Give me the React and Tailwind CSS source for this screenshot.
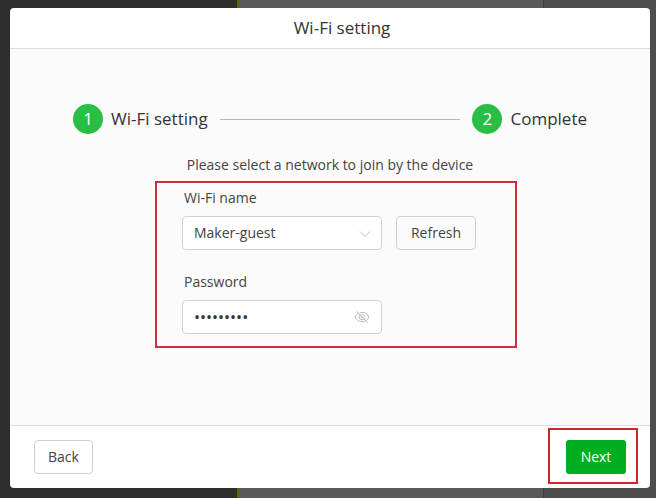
import { useState } from 'react';

const networks = ['Maker-guest', 'Maker-office', 'Maker-lab'];

function StepItem({ number, title }) {
    return (
        <li className="flex items-center gap-2">
            <span className="flex w-[30px] h-[30px] items-center justify-center rounded-full bg-[#28bf45] text-[17px] text-white">
                {number}
            </span>
            <span className="text-[#333]">{title}</span>
        </li>
    );
}

function EyeOffIcon() {
    return (
        <svg className="w-4 h-4" viewBox="0 0 16 16" fill="none" stroke="currentColor" strokeWidth="1">
            <path d="M1 8C2.400 5 4.900 3.300 8 3.300S13.600 5 15 8C13.600 11 11.100 12.700 8 12.700S2.400 11 1 8z" />
            <circle cx="8" cy="8" r="2.800" />
            <circle cx="8" cy="8" r="1" />
            <path stroke="#fff" d="M3.600 1.800L14.600 12.800" />
            <path d="M2.500 2.200L13.800 13.800" />
        </svg>
    );
}

export default function App() {
    const [network, setNetwork] = useState('Maker-guest');
    const [password, setPassword] = useState('maker1234');
    const [showPassword, setShowPassword] = useState(false);

    return (
        <div className="relative flex min-h-screen pt-2 pr-1.5 pb-2.5 pl-2.5 font-['Open_Sans','Noto_Sans',sans-serif] text-[#444]">
            <div className="absolute inset-0 flex">
                <div className="w-[237px] bg-[#2d2d2d]" />
                <div className="flex-1 border-l-2 border-[#6b5f08] bg-[#595959]" />
                <div className="w-[113px] border-l border-[#3c3c3c] bg-[#4d4d4d]" />
            </div>

            <div role="dialog" aria-labelledby="title" className="relative flex flex-1 flex-col overflow-hidden rounded bg-white">
                <header className="flex h-[41px] items-center justify-center border-b border-[#dedede]">
                    <h1 id="title" className="pl-6 text-[17px] text-[#333]">Wi-Fi setting</h1>
                </header>

                <main className="flex-1 bg-[#fbfbfb] pt-[55px]">
                    <ol className="flex items-center px-[63px] text-[17px]">
                        <StepItem number={1} title="Wi-Fi setting" />
                        <li aria-hidden="true" className="mx-3 h-px flex-1 bg-[#b8b8b8]" />
                        <StepItem number={2} title="Complete" />
                    </ol>

                    <p className="mt-5 text-center text-sm leading-[22px]">Please select a network to join by the device</p>

                    <form id="wifi" onSubmit={(e) => e.preventDefault()} className="relative mx-auto w-[296px] pt-[11px] text-sm">
                        <div className="pointer-events-none absolute top-[5px] -right-[39px] -bottom-3.5 -left-[27px] border-2 border-[#c9303a]" />

                        <label htmlFor="network" className="block pl-0.5 leading-[22px]">Wi-Fi name</label>
                        <div className="mt-[7px] flex gap-3.5">
                            <div className="relative w-[200px]">
                                <select
                                    id="network"
                                    value={network}
                                    onChange={(e) => setNetwork(e.target.value)}
                                    className="h-[34px] w-full appearance-none rounded border border-[#d2d2d2] bg-white px-[11px]"
                                >
                                    {networks.map((name) => (
                                        <option key={name}>{name}</option>
                                    ))}
                                </select>
                                <svg className="pointer-events-none absolute top-3 right-[11px] w-3 h-3 text-[#bbb]" viewBox="0 0 12 12" fill="none" stroke="currentColor">
                                    <path d="M1 3.500L6 8.500L11 3.500" />
                                </svg>
                            </div>
                            <button type="button" className="h-[34px] w-20 rounded border border-[#cfcfcf] bg-[#fbfbfb]">
                                Refresh
                            </button>
                        </div>

                        <label htmlFor="password" className="mt-[21px] block pl-0.5 leading-[22px]">Password</label>
                        <div className="relative mt-[7px] w-[200px]">
                            <input
                                id="password"
                                type={showPassword ? 'text' : 'password'}
                                value={password}
                                onChange={(e) => setPassword(e.target.value)}
                                className="h-[34px] w-full rounded border border-[#d2d2d2] bg-white pl-[11px] pr-9 text-base text-[#333]"
                            />
                            <button
                                type="button"
                                aria-label="Show password"
                                onClick={() => setShowPassword(!showPassword)}
                                className="absolute top-[9px] right-3 text-[#bdbdbd]"
                            >
                                <EyeOffIcon />
                            </button>
                        </div>
                    </form>
                </main>

                <footer className="flex items-center justify-between border-t border-[#dedede] px-6 py-3.5 text-sm">
                    <button type="button" className="h-[34px] w-[59px] rounded border border-[#cfcfcf] bg-white">
                        Back
                    </button>
                    <div className="relative">
                        <button type="submit" form="wifi" className="block h-[34px] w-[60px] rounded-[3px] bg-[#00ae22] text-white">
                            Next
                        </button>
                        <div className="pointer-events-none absolute -top-3 -right-3 -bottom-2.5 -left-[18px] border-2 border-[#d0242f]" />
                    </div>
                </footer>
            </div>
        </div>
    );
}
